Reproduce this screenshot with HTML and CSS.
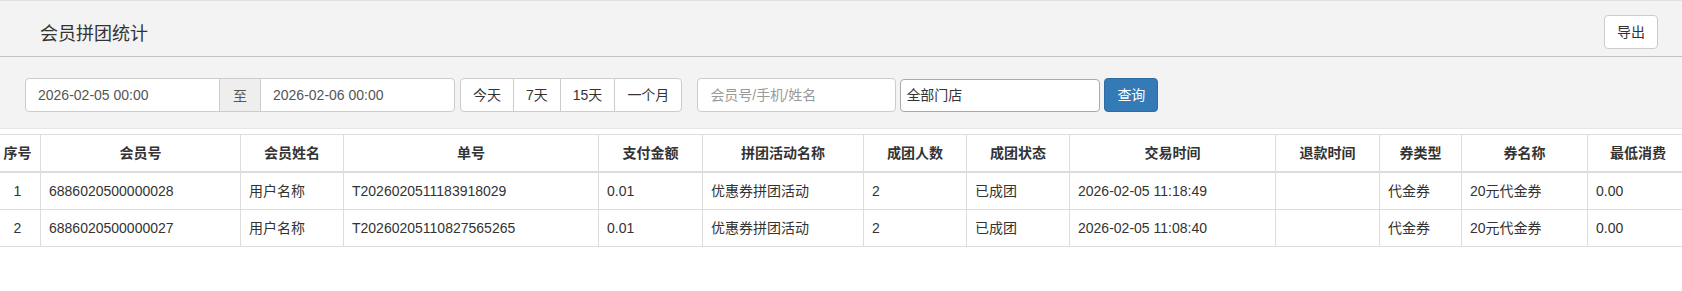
FILE: index.html
```html
<!DOCTYPE html>
<html lang="zh-CN">

<head>
    <meta charset="UTF-8">
    <meta name="viewport" content="width=device-width, initial-scale=1.0">
    <title>会员拼团统计</title>
    <link rel="stylesheet" href="styles.css">
</head>

<body>
    <div class="header">
        <h1>会员拼团统计</h1>
        <button class="btn">导出</button>
    </div>

    <div class="filter">
        <div class="input-group">
            <input type="text" class="form-input date-input" value="2026-02-05 00:00">
            <span class="addon">至</span>
            <input type="text" class="form-input date-input" value="2026-02-06 00:00">
        </div>
        <div class="btn-group">
            <button class="btn">今天</button>
            <button class="btn">7天</button>
            <button class="btn">15天</button>
            <button class="btn">一个月</button>
        </div>
        <input type="text" class="form-input search-input" placeholder="会员号/手机/姓名">
        <div class="store-select">全部门店</div>
        <button class="btn btn-primary">查询</button>
    </div>

    <div class="table-wrap">
        <table class="data-table">
            <colgroup>
                <col style="width: 46px">
                <col style="width: 200px">
                <col style="width: 103px">
                <col style="width: 255px">
                <col style="width: 104px">
                <col style="width: 161px">
                <col style="width: 103px">
                <col style="width: 103px">
                <col style="width: 206px">
                <col style="width: 104px">
                <col style="width: 82px">
                <col style="width: 126px">
                <col style="width: 101px">
            </colgroup>
            <thead>
                <tr>
                    <th>序号</th>
                    <th>会员号</th>
                    <th>会员姓名</th>
                    <th>单号</th>
                    <th>支付金额</th>
                    <th>拼团活动名称</th>
                    <th>成团人数</th>
                    <th>成团状态</th>
                    <th>交易时间</th>
                    <th>退款时间</th>
                    <th>券类型</th>
                    <th>券名称</th>
                    <th>最低消费</th>
                </tr>
            </thead>
            <tbody>
                <tr>
                    <td class="center">1</td>
                    <td>6886020500000028</td>
                    <td>用户名称</td>
                    <td>T2026020511183918029</td>
                    <td>0.01</td>
                    <td>优惠券拼团活动</td>
                    <td>2</td>
                    <td>已成团</td>
                    <td>2026-02-05 11:18:49</td>
                    <td></td>
                    <td>代金券</td>
                    <td>20元代金券</td>
                    <td>0.00</td>
                </tr>
                <tr>
                    <td class="center">2</td>
                    <td>6886020500000027</td>
                    <td>用户名称</td>
                    <td>T20260205110827565265</td>
                    <td>0.01</td>
                    <td>优惠券拼团活动</td>
                    <td>2</td>
                    <td>已成团</td>
                    <td>2026-02-05 11:08:40</td>
                    <td></td>
                    <td>代金券</td>
                    <td>20元代金券</td>
                    <td>0.00</td>
                </tr>
            </tbody>
        </table>
    </div>
</body>

</html>
```

FILE: styles.css
```css
/* gaya dasar halaman */
body {
    margin: 0;
    font-family: "Liberation Sans", "Noto Sans CJK SC", sans-serif;
    font-size: 14px;
    color: #333333;
    background-color: #ffffff;
}

.header {
    display: flex;
    justify-content: space-between;
    align-items: center;
    height: 49px;
    padding: 6px 24px 0 40px;
    background-color: #f3f3f3;
    border-top: 1px solid #e2e2e2;
    border-bottom: 1px solid #c2c2c2;
}

.header h1 {
    margin: 0;
    font-size: 18px;
    font-weight: normal;
    color: #333333;
}

.btn {
    height: 34px;
    padding: 6px 12px;
    font-family: inherit;
    font-size: 14px;
    line-height: 20px;
    color: #333333;
    background-color: #ffffff;
    border: 1px solid #cccccc;
    border-radius: 4px;
    cursor: pointer;
}

.btn-primary {
    width: 54px;
    color: #ffffff;
    background-color: #337ab7;
    border-color: #2e6da4;
}

.filter {
    display: flex;
    align-items: flex-start;
    height: 50px;
    padding: 21px 0 0 25px;
    background-color: #f3f3f3;
    border-bottom: 1px solid #e6e6e6;
}

.form-input {
    box-sizing: border-box;
    height: 34px;
    padding: 6px 12px;
    font-family: inherit;
    font-size: 14px;
    color: #555555;
    background-color: #ffffff;
    border: 1px solid #cccccc;
    border-radius: 4px;
    outline: none;
}

.form-input::placeholder {
    color: #999999;
}

.input-group {
    display: flex;
}

.date-input {
    width: 195px;
}

.input-group .date-input:first-child {
    border-radius: 4px 0 0 4px;
}

.input-group .date-input:last-child {
    border-radius: 0 4px 4px 0;
    margin-left: -1px;
}

.addon {
    display: flex;
    align-items: center;
    justify-content: center;
    box-sizing: border-box;
    width: 42px;
    height: 34px;
    margin-left: -1px;
    color: #555555;
    background-color: #eeeeee;
    border: 1px solid #cccccc;
}

.btn-group {
    display: flex;
    margin-left: 5px;
}

.btn-group .btn {
    border-radius: 0;
}

.btn-group .btn + .btn {
    margin-left: -1px;
}

.btn-group .btn:first-child {
    border-radius: 4px 0 0 4px;
}

.btn-group .btn:last-child {
    border-radius: 0 4px 4px 0;
}

.search-input {
    width: 199px;
    margin-left: 15px;
}

.store-select {
    box-sizing: border-box;
    width: 200px;
    height: 33px;
    margin: 1px 4px 0 4px;
    padding: 6px 5px;
    line-height: 19px;
    color: #333333;
    background-color: #ffffff;
    border: 1px solid #aaaaaa;
    border-radius: 4px;
}

.table-wrap {
    margin-top: 5px;
    overflow: hidden;
}

.data-table {
    width: 1694px;
    margin-left: -6px;
    table-layout: fixed;
    border-collapse: collapse;
}

.data-table th,
.data-table td {
    padding: 8px;
    line-height: 20px;
    border: 1px solid #dddddd;
    white-space: nowrap;
    overflow: hidden;
}

.data-table th {
    font-weight: bold;
    text-align: center;
    border-bottom: 2px solid #dddddd;
}

.data-table td {
    text-align: left;
}

.data-table td.center {
    text-align: center;
}
```
